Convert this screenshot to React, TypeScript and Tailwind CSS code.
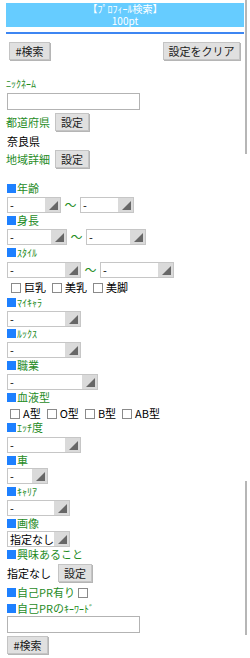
import React from 'react';

const font = 'font-["Noto_Sans_CJK_JP",sans-serif]';

const Label = ({ children, small, className = '' }: { children: React.ReactNode; small?: boolean; className?: string }) => (
  <div className={`flex items-center h-[13px] text-[#1f8c1f] ${small ? 'text-[10px]' : 'text-[11px]'} ${className}`}>
    <span className="w-[9px] h-[9px] bg-[#1e80ff] mr-[1px] shrink-0" />
    <span className="leading-none whitespace-nowrap">{children}</span>
  </div>
);

const Select = ({ w, text = '-', className = '' }: { w: string; text?: string; className?: string }) => (
  <div className={`${w} h-[16px] flex border border-[#c6c6c6] bg-white shrink-0 ${className}`}>
    <span className="flex-1 pl-[2px] text-[11px] leading-[14px] text-black whitespace-nowrap overflow-hidden">{text}</span>
    <span className="w-[15px] bg-[#dadada] flex items-end justify-end pr-[2px] pb-[2px]">
      <svg width="9" height="9" viewBox="0 0 9 9">
        <polygon points="9,0 9,9 0,9" fill="#676767" />
      </svg>
    </span>
  </div>
);

const Btn = ({ children, w }: { children: React.ReactNode; w?: string }) => (
  <div className={`${w ?? ''} h-[18px] px-[5px] shrink-0 flex items-center justify-center whitespace-nowrap bg-[#e0e0e0] border border-[#c4c4c4] shadow-[1px_1px_0_#b5b5b5] text-[11px] text-[#1a1a1a] leading-none`}>
    {children}
  </div>
);

const Check = () => <span className="w-[10px] h-[10px] border border-[#8a8a8a] bg-white shrink-0" />;

const Range = ({ w, className = '' }: { w: string; className?: string }) => (
  <div className={`flex items-center ${className}`}>
    <Select w={w} />
    <span className="w-[19px] text-center text-[#1f8c1f] text-[12px] leading-none">〜</span>
    <Select w={w} />
  </div>
);

export default function App() {
  return (
    <div className={`${font} bg-white w-[250px] h-[658px] flex overflow-hidden`}>
      <div className="w-[245px] pl-[6px] pr-[1px]">
        <div className="mt-[3px] h-[24px] bg-[#66ccff] flex flex-col items-center justify-center text-white text-[10px] leading-[12px]">
          <span>【ﾌﾟﾛﾌｨｰﾙ検索】</span>
          <span>100pt</span>
        </div>
        <div className="mt-[5px] h-[2px] bg-[#3d86f2]" />
        <div className="mt-[8px] flex justify-between pl-[3px] pr-[4px]">
          <Btn w="w-[41px]">#検索</Btn>
          <Btn w="w-[77px]">設定をクリア</Btn>
        </div>

        <div className="mt-[18px] h-[11px] text-[10px] leading-[11px] text-[#1f8c1f]">ﾆｯｸﾈｰﾑ</div>
        <div className="mt-[4px] ml-[1px] w-[133px] h-[17px] border border-[#b3b3b3] bg-white" />
        <div className="mt-[3px] h-[18px] flex items-center gap-[5px] text-[11px] text-[#1f8c1f]">
          <span className="leading-none">都道府県</span>
          <Btn>設定</Btn>
        </div>
        <div className="mt-[3px] h-[14px] text-[11px] leading-[14px] text-black pl-[1px]">奈良県</div>
        <div className="mt-[2px] h-[18px] flex items-center gap-[5px] text-[11px] text-[#1f8c1f]">
          <span className="leading-none">地域詳細</span>
          <Btn>設定</Btn>
        </div>

        <div className="pl-[1px]">
          <Label className="mt-[14px]">年齢</Label>
          <Range w="w-[54px]" className="mt-[2px]" />
          <Label className="mt-[1px]">身長</Label>
          <Range w="w-[60px]" className="mt-[2px]" />
          <Label small className="mt-[1px]">ｽﾀｲﾙ</Label>
          <Range w="w-[74px]" className="mt-[3px]" />
          <div className="mt-[3px] h-[13px] flex items-center gap-[3px] text-[11px] leading-none text-black pl-[4px]">
            <Check /><span className="mr-[3px]">巨乳</span>
            <Check /><span className="mr-[3px]">美乳</span>
            <Check /><span>美脚</span>
          </div>
          <Label small className="mt-[2px]">ﾏｲｷｬﾗ</Label>
          <Select w="w-[74px]" className="mt-[2px]" />
          <Label small>ﾙｯｸｽ</Label>
          <Select w="w-[74px]" className="mt-[2px]" />
          <Label className="mt-[1px]">職業</Label>
          <Select w="w-[91px]" className="mt-[2px]" />
          <Label className="mt-[1px]">血液型</Label>
          <div className="mt-[3px] h-[13px] flex items-center gap-[3px] text-[11px] leading-none text-black pl-[3px]">
            <Check /><span className="mr-[3px]">A型</span>
            <Check /><span className="mr-[3px]">O型</span>
            <Check /><span className="mr-[3px]">B型</span>
            <Check /><span>AB型</span>
          </div>
          <Label small className="mt-[1px]">ｴｯﾁ<span className="text-[11px]">度</span></Label>
          <Select w="w-[74px]" className="mt-[3px]" />
          <Label className="mt-[1px]">車</Label>
          <Select w="w-[41px]" className="mt-[1px]" />
          <Label small className="mt-[1px]">ｷｬﾘｱ</Label>
          <Select w="w-[63px]" className="mt-[2px]" />
          <Label className="mt-[1px]">画像</Label>
          <Select w="w-[63px]" text="指定なし" className="mt-[1px]" />
          <Label className="mt-[1px]">興味あること</Label>
          <div className="mt-[3px] h-[18px] flex items-center gap-[7px] text-[11px] text-black">
            <span className="leading-none">指定なし</span>
            <Btn>設定</Btn>
          </div>
          <div className="mt-[4px] flex items-center gap-[3px]">
            <Label>自己PR有り</Label>
            <Check />
          </div>
          <Label className="mt-[3px]">自己PRの<span className="text-[10px]">ｷｰﾜｰﾄﾞ</span></Label>
          <div className="mt-[1px] w-[133px] h-[17px] border border-[#b3b3b3] bg-white" />
          <div className="mt-[3px] flex"><Btn w="w-[41px]">#検索</Btn></div>
        </div>
      </div>
      <div className="w-[2px] flex flex-col">
        <div className="h-[154px] bg-[#b6b6b6]" />
        <div className="h-[327px]" />
        <div className="h-[154px] bg-[#b6b6b6]" />
      </div>
    </div>
  );
}
